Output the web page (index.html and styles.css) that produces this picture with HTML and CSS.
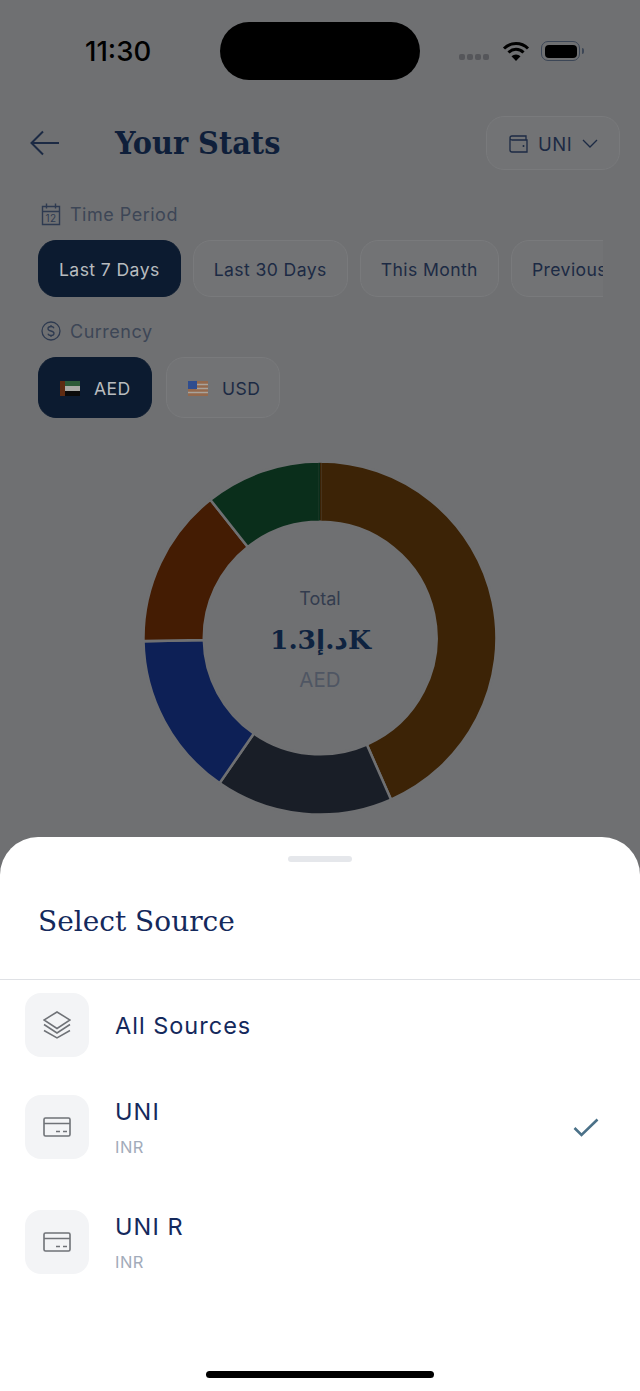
FILE: index.html
```html
<!DOCTYPE html>
<html>
<head>
    <title>Your Stats</title>
    <link rel="stylesheet" href="styles.css">
</head>
<body>
    <div class="phone">
        <div class="statusBar">
            <span class="time">11:30</span>
            <div class="island"></div>
            <div class="statusIcons">
                <div class="signal"><i></i><i></i><i></i><i></i></div>
                <svg class="wifi" width="28" height="20" viewBox="0 0 28 20">
                    <path d="M2 7.500a17 17 0 0 1 24 0" fill="none" stroke="#000" stroke-width="3"/>
                    <path d="M6.500 11.500a10.500 10.500 0 0 1 15 0" fill="none" stroke="#000" stroke-width="3"/>
                    <path d="M14 20l-4.500-4.800a6.500 6.500 0 0 1 9 0z" fill="#000"/>
                </svg>
                <div class="battery"><div class="batteryFill"></div></div>
                <div class="batteryCap"></div>
            </div>
        </div>

        <div class="header">
            <svg class="backIcon" width="30" height="26" viewBox="0 0 30 26">
                <path d="M29 13H2M13 1.500L1.500 13 13 24.500" fill="none" stroke="#1c2a44" stroke-width="2"/>
            </svg>
            <h1 class="pageTitle">Your Stats</h1>
            <div class="sourceButton">
                <svg width="20" height="18" viewBox="0 0 20 18">
                    <path d="M1 3.500V15a2 2 0 0 0 2 2h15V5H3a2 2 0 0 1-2-2 2 2 0 0 1 2-2h14v4" fill="none" stroke="#1c2a44" stroke-width="1.300"/>
                    <circle cx="14.500" cy="11" r="1" fill="#1c2a44"/>
                </svg>
                <span>UNI</span>
                <svg width="16" height="10" viewBox="0 0 16 10">
                    <path d="M1 1l7 7 7-7" fill="none" stroke="#1c2a44" stroke-width="1.300"/>
                </svg>
            </div>
        </div>

        <div class="sectionLabel firstLabel">
            <svg width="20" height="24" viewBox="0 0 20 24">
                <path d="M1.500 4.500h17v18h-17zM1.500 9.500h17M5.500 1.500v5M14.500 1.500v5" fill="none" stroke="#2e3a50" stroke-width="1.400"/>
                <text x="10" y="20" class="calendarDay">12</text>
            </svg>
            <span>Time Period</span>
        </div>
        <div class="chipRow">
            <div class="chip active">Last 7 Days</div>
            <div class="chip">Last 30 Days</div>
            <div class="chip">This Month</div>
            <div class="chip">Previous Month</div>
        </div>

        <div class="sectionLabel currencyLabel">
            <svg width="20" height="20" viewBox="0 0 20 20">
                <circle cx="10" cy="10" r="9" fill="none" stroke="#2e3a50" stroke-width="1.300"/>
                <path d="M13 7.200C12.500 6 11.500 5.500 10 5.500 8.200 5.500 7 6.400 7 7.700c0 3 6 1.600 6 4.600 0 1.300-1.300 2.200-3 2.200-1.600 0-2.600-.6-3.100-1.800M10 4v1.500M10 14.500V16" fill="none" stroke="#2e3a50" stroke-width="1.300"/>
            </svg>
            <span>Currency</span>
        </div>
        <div class="chipRow currencyRow">
            <div class="chip active">
                <svg class="flag" width="20" height="15" viewBox="0 0 20 15">
                    <rect width="20" height="15" fill="#a9aaa6"/>
                    <rect x="4" width="16" height="5" fill="#2c5a38"/>
                    <rect x="4" y="10" width="16" height="5" fill="#0a0a0a"/>
                    <rect width="5" height="15" fill="#5e2b12"/>
                </svg>
                <span>AED</span>
            </div>
            <div class="chip">
                <svg class="flag" width="20" height="15" viewBox="0 0 20 15">
                    <rect width="20" height="15" fill="#94694d"/>
                    <path d="M8 3.500h12M8 7.500h12M0 11.500h20" stroke="#a8a39c" stroke-width="1.500"/>
                    <rect width="9" height="8" fill="#2f4d8f"/>
                </svg>
                <span>USD</span>
            </div>
        </div>

        <div class="donut">
            <svg width="352" height="352" viewBox="-174.500 -174.500 349 349">
                <g stroke="#6f7072" stroke-width="2.500">
                    <path d="M0 -175A175 175 0 0 1 70.400 160.200L46.400 105.600A115.200 115.200 0 0 0 0 -115.200Z" fill="#3c2306"/>
                    <path d="M70.400 160.200A175 175 0 0 1 -99.600 143.900L-65.600 94.700A115.200 115.200 0 0 0 46.400 105.600Z" fill="#191e27"/>
                    <path d="M-99.600 143.900A175 175 0 0 1 -175 3.100L-115.200 2A115.200 115.200 0 0 0 -65.600 94.700Z" fill="#0d2056"/>
                    <path d="M-175 3.100A175 175 0 0 1 -108.700 -137.100L-71.600 -90.300A115.200 115.200 0 0 0 -115.200 2Z" fill="#441c03"/>
                    <path d="M-108.700 -137.100A175 175 0 0 1 0 -175V-115.200A115.200 115.200 0 0 0 -71.600 -90.300Z" fill="#0a2e1b"/>
                </g>
                <rect x="-1.500" y="-173.700" width="1.500" height="57.200" fill="#0a2e1b"/>
                <rect x="0" y="-173.700" width="1.500" height="57.200" fill="#3c2306"/>
            </svg>
            <div class="donutCenter">
                <div class="donutLabel">Total</div>
                <div class="donutValue">1.3د.إK</div>
                <div class="donutUnit">AED</div>
            </div>
        </div>

        <div class="sheet">
            <div class="handle"></div>
            <h2 class="sheetTitle">Select Source</h2>
            <div class="sourceList">
                <div class="sourceRow">
                    <div class="sourceIcon">
                        <svg width="28" height="28" viewBox="0 0 28 28">
                            <path d="M14 1L27 9 14 17.500 1 9zM1 13.500l13 8.500 13-8.500M1 19.500l13 7.500 13-7.500" fill="none" stroke="#6f7277" stroke-width="1.500"/>
                        </svg>
                    </div>
                    <div class="sourceName">All Sources</div>
                </div>
                <div class="sourceRow">
                    <div class="sourceIcon">
                        <svg width="28" height="20" viewBox="0 0 28 20">
                            <path d="M1 2.500a1.500 1.500 0 0 1 1.500-1.500h23a1.500 1.500 0 0 1 1.500 1.500v15a1.500 1.500 0 0 1-1.500 1.500h-23a1.500 1.500 0 0 1-1.500-1.500zM1 6.500h26M13 14.500h4M20 14.500h4" fill="none" stroke="#6f7277" stroke-width="1.600"/>
                        </svg>
                    </div>
                    <div class="sourceText">
                        <div class="sourceTitle">UNI</div>
                        <div class="sourceSub">INR</div>
                    </div>
                    <svg class="checkIcon" width="28" height="20" viewBox="0 0 28 20">
                        <path d="M2.500 10l7 7L25.500 1.500" fill="none" stroke="#4b7188" stroke-width="2.600"/>
                    </svg>
                </div>
                <div class="sourceRow">
                    <div class="sourceIcon">
                        <svg width="28" height="20" viewBox="0 0 28 20">
                            <path d="M1 2.500a1.500 1.500 0 0 1 1.500-1.500h23a1.500 1.500 0 0 1 1.500 1.500v15a1.500 1.500 0 0 1-1.500 1.500h-23a1.500 1.500 0 0 1-1.500-1.500zM1 6.500h26M13 14.500h4M20 14.500h4" fill="none" stroke="#6f7277" stroke-width="1.600"/>
                        </svg>
                    </div>
                    <div class="sourceText">
                        <div class="sourceTitle">UNI R</div>
                        <div class="sourceSub">INR</div>
                    </div>
                </div>
            </div>
            <div class="homeBar"></div>
        </div>
    </div>
</body>
</html>
```

FILE: styles.css
```css
body {
    margin: 0;
    background-color: #6f7072;
    font-family: Inter, "Noto Sans", sans-serif;
}
.phone {
    position: relative;
    width: 640px;
    height: 1391px;
    overflow: hidden;
    background-color: #6f7072;
}
.statusBar {
    display: flex;
    align-items: center;
    height: 58px;
    padding: 22px 0 0 85px;
}
.time {
    width: 135px;
    font-size: 27.500px;
    font-weight: 500;
    color: #000;
}
.island {
    width: 200px;
    height: 58px;
    border-radius: 29px;
    background-color: #000;
}
.statusIcons {
    display: flex;
    align-items: center;
    margin-left: 39px;
}
.signal {
    display: flex;
    gap: 2px;
    margin: 12px 13px 0 0;
}
.signal i {
    width: 6px;
    height: 6px;
    border-radius: 2px;
    background-color: #55565a;
}
.wifi {
    margin-right: 11px;
}
.battery {
    width: 39px;
    height: 20px;
    box-sizing: border-box;
    padding: 2.500px;
    border: 1.500px solid #3c4656;
    border-radius: 7px;
}
.batteryFill {
    height: 100%;
    border-radius: 4px;
    background-color: #000;
}
.batteryCap {
    width: 2px;
    height: 6px;
    margin-left: 2px;
    border-radius: 0 2px 2px 0;
    background-color: #3c4656;
}
.header {
    display: flex;
    align-items: center;
    height: 54px;
    margin-top: 36px;
    padding: 0 20px 0 30px;
}
.backIcon {
    flex-shrink: 0;
}
.pageTitle {
    flex: 1;
    margin: 0 0 0 55px;
    font-family: "DejaVu Serif Condensed", "DejaVu Serif", serif;
    font-size: 32px;
    font-weight: 700;
    color: #0f1f3a;
}
.sourceButton {
    display: flex;
    align-items: center;
    gap: 9px;
    width: 134px;
    height: 54px;
    box-sizing: border-box;
    padding: 1px 0 0 22px;
    border: 1px solid #797a7c;
    border-radius: 18px;
    background-color: #727375;
    font-size: 18.500px;
    letter-spacing: 0.5px;
    color: #1c2a44;
}
.sourceButton svg:last-child {
    margin-left: 1px;
}
.sectionLabel {
    display: flex;
    align-items: center;
    gap: 9px;
    margin-left: 41px;
    font-size: 18px;
    letter-spacing: 0.5px;
    color: #3d4656;
}
.firstLabel {
    height: 24px;
    margin-top: 32px;
}
.calendarDay {
    font-size: 10px;
    text-anchor: middle;
    fill: #2e3a50;
}
.currencyLabel {
    height: 24px;
    margin-top: 21px;
}
.chipRow {
    display: flex;
    gap: 12px;
    width: 565px;
    height: 58px;
    margin: 14px 0 0 38px;
    overflow: hidden;
}
.chip {
    display: flex;
    flex-shrink: 0;
    align-items: center;
    box-sizing: border-box;
    height: 57px;
    padding: 1px 20px 0;
    border: 1px solid #797a7c;
    border-radius: 18px;
    background-color: #727375;
    font-size: 17.600px;
    letter-spacing: 0.4px;
    color: #1c2a44;
}
.chip.active {
    border-color: #0c1b30;
    background-color: #0c1b30;
    color: #b8bbbf;
}
.currencyRow {
    gap: 14px;
    height: 62px;
    margin-top: 14px;
}
.currencyRow .chip {
    gap: 14px;
    width: 114px;
    height: 61px;
    padding: 2px 0 0 21px;
}
.flag {
    flex-shrink: 0;
}
.donut {
    position: relative;
    width: 352px;
    height: 352px;
    margin: 43px auto 0;
}
.donut svg {
    display: block;
}
.donutCenter {
    position: absolute;
    top: 126px;
    left: 0;
    width: 100%;
    text-align: center;
}
.donutLabel {
    font-size: 18px;
    line-height: 22px;
    color: #333c4e;
}
.donutValue {
    margin-top: 12px;
    font-family: "DejaVu Serif", "DejaVu Sans", serif;
    font-size: 26.500px;
    font-weight: 700;
    line-height: 36px;
    letter-spacing: -1px;
    color: #0e2340;
}
.donutUnit {
    margin-top: 10px;
    font-size: 20.500px;
    line-height: 24px;
    color: #4f5663;
}
.sheet {
    position: absolute;
    top: 837px;
    left: 0;
    width: 640px;
    height: 554px;
    border-radius: 38px 38px 0 0;
    background-color: #fff;
}
.handle {
    width: 64px;
    height: 6px;
    margin: 19px auto 0;
    border-radius: 3px;
    background-color: #e5e7eb;
}
.sheetTitle {
    height: 118px;
    box-sizing: border-box;
    margin: 0;
    padding: 42px 0 0 38px;
    border-bottom: 1px solid #dfe1e5;
    font-family: "DejaVu Serif", serif;
    font-size: 28px;
    font-weight: 400;
    line-height: 36px;
    color: #14295c;
}
.sourceList {
    display: flex;
    flex-direction: column;
    gap: 38px;
    padding: 13px 0 0 25px;
}
.sourceRow {
    display: flex;
    align-items: flex-start;
    gap: 26px;
}
.sourceIcon {
    display: flex;
    flex-shrink: 0;
    align-items: center;
    justify-content: center;
    width: 64px;
    height: 64px;
    border-radius: 16px;
    background-color: #f3f4f6;
}
.sourceName {
    align-self: center;
    font-size: 23.500px;
    letter-spacing: 1px;
    color: #14295c;
}
.sourceText {
    flex: 1;
    padding-bottom: 12px;
}
.sourceTitle {
    font-size: 23.500px;
    line-height: 34px;
    letter-spacing: 1.100px;
    color: #14295c;
}
.sourceSub {
    margin-top: 5px;
    font-size: 16.500px;
    line-height: 26px;
    letter-spacing: 0.5px;
    color: #a2abba;
}
.checkIcon {
    margin: 23px 40px 0 0;
}
.homeBar {
    position: absolute;
    bottom: 13px;
    left: 206px;
    width: 228px;
    height: 7px;
    border-radius: 4px;
    background-color: #000;
}
```
